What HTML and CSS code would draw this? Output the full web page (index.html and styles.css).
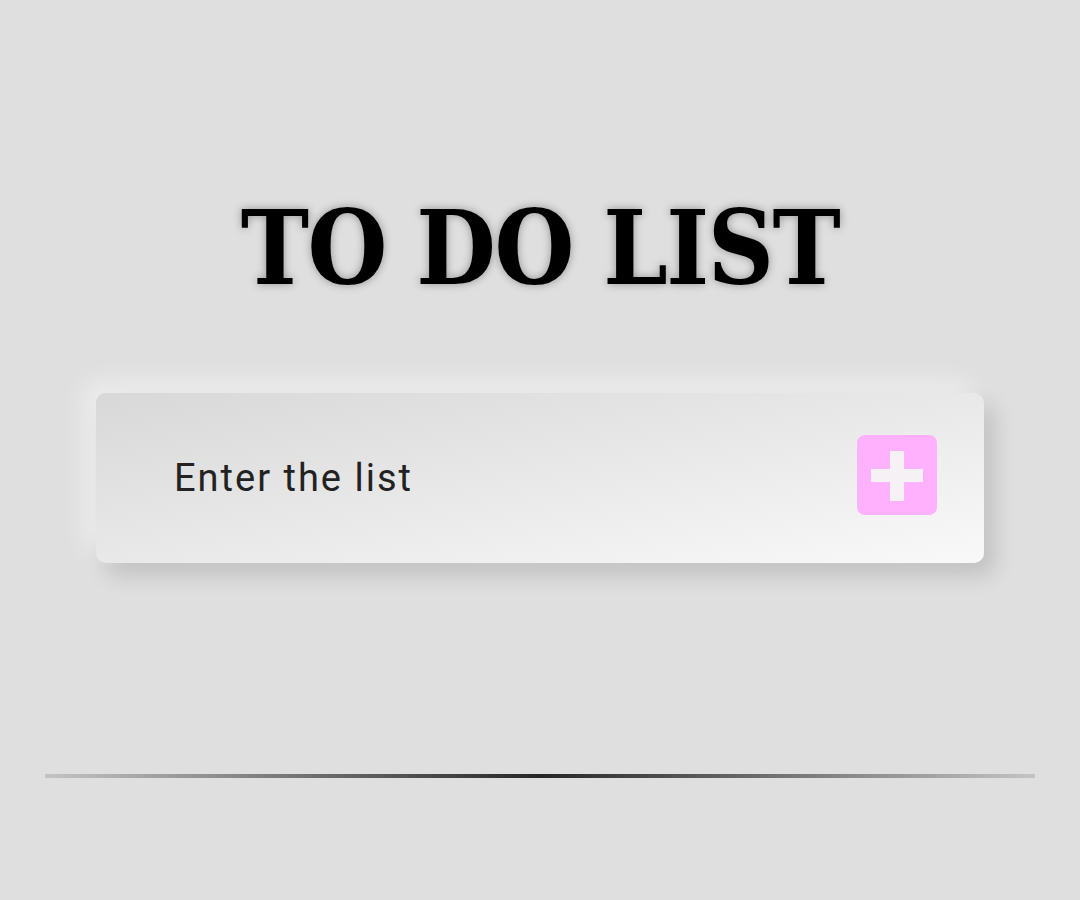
FILE: index.html
```html
<!DOCTYPE html>
<html lang="en">
<head>
<meta charset="utf-8">
<title>To Do List</title>
<link rel="stylesheet" href="styles.css">
</head>
<body>
<main class="page">
  <h1 class="title">TO DO LIST</h1>
  <form class="card" onsubmit="return false">
    <input class="entry" type="text" placeholder="Enter the list">
    <button class="add" type="button" aria-label="Add">
      <svg width="80" height="80" viewBox="0 0 80 80">
        <rect x="0" y="0" width="80" height="80" rx="8" fill="#ffb1fd"/>
        <rect x="14" y="34" width="52" height="13" fill="#f5f1f5"/>
        <rect x="33" y="16" width="14" height="50" fill="#f5f1f5"/>
      </svg>
    </button>
  </form>
  <div class="rule"></div>
</main>
</body>
</html>
```
FILE: styles.css
```css
html, body {
  margin: 0;
  padding: 0;
  background: #dfdfdf;
}
body {
  font-family: Roboto, "Liberation Sans", sans-serif;
  height: 900px;
  overflow: hidden;
}
.page {
  display: flex;
  flex-direction: column;
  align-items: center;
  padding-top: 197px;
}
.title {
  margin: 0;
  font-family: "DejaVu Serif Condensed", "DejaVu Serif", serif;
  font-stretch: condensed;
  font-weight: bold;
  font-size: 102px;
  line-height: 102px;
  letter-spacing: -1.5px;
  color: #000;
  text-shadow: 0 0 8px rgba(0, 0, 0, 0.35);
}
.card {
  margin-top: 94px;
  width: 888px;
  height: 170px;
  box-sizing: border-box;
  border-radius: 10px;
  background: linear-gradient(to bottom right, #d8d8d8, #f9f9f9);
  box-shadow: -12px -12px 24px rgba(255, 255, 255, 0.45), 10px 12px 22px rgba(0, 0, 0, 0.14);
  display: flex;
  align-items: center;
  padding: 0 47px 0 78px;
}
.entry {
  flex: 1;
  border: none;
  outline: none;
  background: transparent;
  font-family: Roboto, "Liberation Sans", sans-serif;
  font-size: 38px;
  letter-spacing: 2px;
  color: #222;
  padding: 0;
}
.entry::placeholder {
  color: #222;
  opacity: 1;
}
.add {
  border: none;
  padding: 0;
  margin: 0 0 6px 0;
  background: none;
  width: 80px;
  height: 80px;
  display: block;
  cursor: pointer;
}
.add svg {
  display: block;
}
.rule {
  margin-top: 211px;
  width: 990px;
  height: 4px;
  background: linear-gradient(to right, #c4c4c4, #262626 50%, #c4c4c4);
}
```
